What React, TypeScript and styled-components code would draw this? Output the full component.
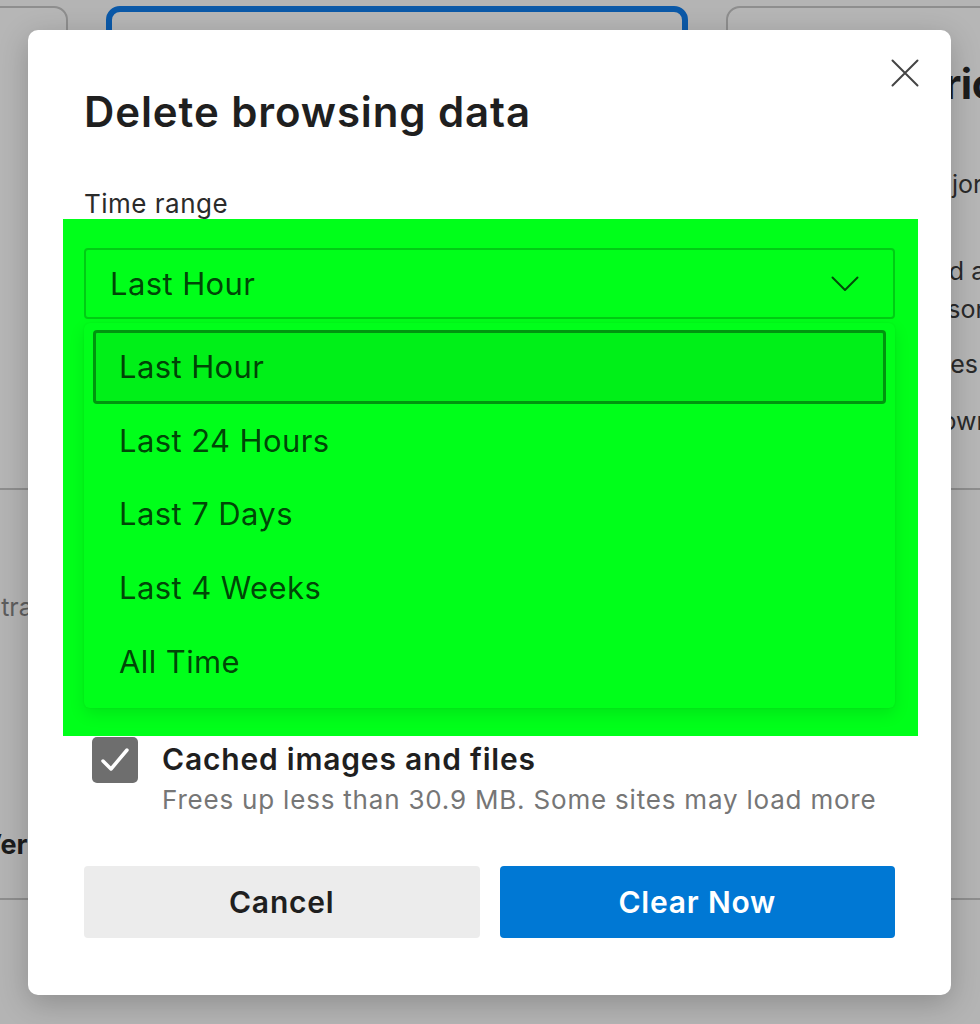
import React from 'react';
import styled, { createGlobalStyle } from 'styled-components';

const GlobalStyle = createGlobalStyle`
  html, body {
    margin: 0;
    padding: 0;
  }
  body {
    background: #b4b4b4;
    font-family: Inter, "Noto Sans", sans-serif;
    overflow: hidden;
  }
`

const Page = styled.div`
  position: relative;
  width: 980px;
  height: 1024px;
  overflow: hidden;
  background: #b4b4b4;
`

/* ---------- page behind the modal ---------- */

const Backdrop = styled.div`
  padding-top: 6px;
  display: flex;
  flex-direction: column;
`

const CardRow = styled.div`
  display: grid;
  grid-template-columns: 88px 582px 600px;
  column-gap: 38px;
  margin-left: -20px;
  height: 484px;
`

const Card = styled.div<{ $selected?: boolean }>`
  box-sizing: border-box;
  border: ${p => p.$selected ? '6px solid #0b59a8' : '2px solid #8e8e8e'};
  border-radius: 14px;
  background: #b6b6b6;
  display: flex;
  flex-direction: column;
`

const CardHeading = styled.div<{ $indent: number }>`
  margin: 50px 0 0 ${p => p.$indent}px;
  font-size: 42px;
  font-weight: 700;
  letter-spacing: -0.5px;
  color: #1c1c1c;
  white-space: nowrap;
`

const CardLine = styled.div<{ $indent: number; $gap: number }>`
  margin: ${p => p.$gap}px 0 0 ${p => p.$indent}px;
  font-size: 25px;
  line-height: 30px;
  color: #2a2a2a;
  white-space: nowrap;
`

const SettingRow = styled.div<{ $height: number }>`
  height: ${p => p.$height}px;
  border-bottom: 2px solid #8e8e8e;
  display: flex;
  flex-direction: column;
  box-sizing: border-box;
`

const SettingText = styled.div<{ $bold?: boolean; $indent: number; $top: number }>`
  margin: ${p => p.$top}px 0 0 ${p => p.$indent}px;
  font-size: ${p => p.$bold ? '27px' : '25px'};
  line-height: 30px;
  font-weight: ${p => p.$bold ? 700 : 400};
  color: ${p => p.$bold ? '#1c1c1c' : '#5e5e5e'};
  white-space: nowrap;
`

/* ---------- modal ---------- */

const Dialog = styled.div`
  position: absolute;
  left: 28px;
  top: 30px;
  width: 923px;
  box-sizing: border-box;
  padding: 58px 56px 57px;
  background: #ffffff;
  border-radius: 10px;
  box-shadow: 0 8px 30px rgba(0, 0, 0, 0.22);
  display: flex;
  flex-direction: column;
`

const CloseButton = styled.button`
  position: absolute;
  top: 29px;
  right: 32px;
  width: 28px;
  height: 28px;
  padding: 0;
  border: none;
  background: none;
  cursor: pointer;
  display: flex;
`

const Title = styled.h1`
  margin: 0;
  font-size: 42px;
  line-height: 48px;
  font-weight: 600;
  letter-spacing: 0.9px;
  color: #1f1f1f;
`

const FieldLabel = styled.div`
  margin-top: 53px;
  font-size: 26px;
  line-height: 30px;
  letter-spacing: 0.5px;
  color: #2b2b2b;
`

const Highlight = styled.div`
  margin: 0 -23px 0 -21px;
  padding: 29px 23px 28px 21px;
  background: #00ff1a;
  display: flex;
  flex-direction: column;
`

const SelectBox = styled.div`
  box-sizing: border-box;
  height: 71px;
  border: 2px solid rgba(0, 0, 0, 0.2);
  border-radius: 4px;
  padding: 0 34px 0 24px;
  display: flex;
  align-items: center;
  justify-content: space-between;
  font-size: 31px;
  letter-spacing: 0.4px;
  color: rgba(0, 0, 0, 0.74);
`

const Menu = styled.ul`
  list-style: none;
  margin: 4px 0 0;
  padding: 7px 9px 10px;
  border-radius: 6px;
  box-shadow: 0 6px 16px rgba(0, 0, 0, 0.1), 0 0 2px rgba(0, 0, 0, 0.08);
  display: flex;
  flex-direction: column;
`

const MenuItem = styled.li<{ $active?: boolean }>`
  box-sizing: border-box;
  height: 73.6px;
  padding: 0 23px;
  border: 3px solid ${p => p.$active ? 'rgba(0, 0, 0, 0.38)' : 'transparent'};
  border-radius: 4px;
  background: ${p => p.$active ? 'rgba(0, 0, 0, 0.06)' : 'transparent'};
  display: flex;
  align-items: center;
  font-size: 31px;
  letter-spacing: 0.4px;
  color: rgba(0, 0, 0, 0.74);
`

const CheckRow = styled.label`
  margin: 1px 0 0 8px;
  display: flex;
  align-items: flex-start;
  gap: 24px;
`

const CheckBox = styled.span`
  flex: none;
  width: 46px;
  height: 46px;
  border-radius: 5px;
  background: #6e6e6e;
  display: flex;
  align-items: center;
  justify-content: center;
`

const CheckText = styled.div`
  display: flex;
  flex-direction: column;
`

const CheckTitle = styled.div`
  margin-top: 5px;
  font-size: 30px;
  line-height: 34px;
  font-weight: 600;
  letter-spacing: 0.8px;
  color: #1f1f1f;
`

const CheckHint = styled.div`
  margin-top: 9px;
  font-size: 26px;
  line-height: 30px;
  letter-spacing: 0.8px;
  color: #767676;
`

const Actions = styled.div`
  margin-top: 51px;
  display: grid;
  grid-template-columns: 1fr 1fr;
  gap: 20px;
`

const ActionButton = styled.button<{ $primary?: boolean }>`
  height: 72px;
  border: none;
  border-radius: 4px;
  background: ${p => p.$primary ? '#0078d4' : '#ececec'};
  color: ${p => p.$primary ? '#ffffff' : '#1f1f1f'};
  font-family: Inter, "Noto Sans", sans-serif;
  font-size: 30px;
  font-weight: 600;
  letter-spacing: 0.8px;
  cursor: pointer;
`

const ranges = ['Last Hour', 'Last 24 Hours', 'Last 7 Days', 'Last 4 Weeks', 'All Time']

const App: React.FC = () => {
  return (
    <Page>
      <GlobalStyle />

      <Backdrop>
        <CardRow>
          <Card />
          <Card $selected />
          <Card>
            <CardHeading $indent={174}>Strict</CardHeading>
            <CardLine $indent={188} $gap={60}>majority of trackers</CardLine>
            <CardLine $indent={192} $gap={57}>and ads will likely</CardLine>
            <CardLine $indent={180} $gap={8}>personalization</CardLine>
            <CardLine $indent={195} $gap={25}>sites running trackers</CardLine>
            <CardLine $indent={185} $gap={27}>known harmful trackers</CardLine>
          </Card>
        </CardRow>
        <SettingRow $height={410}>
          <SettingText $indent={-27} $top={102}>extra</SettingText>
          <SettingText $indent={-18} $top={208} $bold>Ver</SettingText>
        </SettingRow>
      </Backdrop>

      <Dialog role="dialog" aria-label="Delete browsing data">
        <CloseButton aria-label="Close">
          <svg width="28" height="28" viewBox="0 0 28 28">
            <path d="M1.5 1.5 L26.5 26.5 M26.5 1.5 L1.5 26.5" stroke="#444" strokeWidth="2" strokeLinecap="round" fill="none" />
          </svg>
        </CloseButton>

        <Title>Delete browsing data</Title>
        <FieldLabel>Time range</FieldLabel>

        <Highlight>
          <SelectBox>
            <span>Last Hour</span>
            <svg width="28" height="16" viewBox="0 0 28 16">
              <polyline points="1.5,1.5 14,14 26.5,1.5" stroke="rgba(0,0,0,0.7)" strokeWidth="2" fill="none" strokeLinecap="round" strokeLinejoin="round" />
            </svg>
          </SelectBox>
          <Menu>
            {ranges.map((r, i) => (
              <MenuItem key={r} $active={i === 0}>{r}</MenuItem>
            ))}
          </Menu>
        </Highlight>

        <CheckRow>
          <CheckBox>
            <svg width="30" height="26" viewBox="0 0 30 26">
              <polyline points="3,14 11,22 27,3" stroke="#fff" strokeWidth="3.5" fill="none" strokeLinecap="round" strokeLinejoin="round" />
            </svg>
          </CheckBox>
          <CheckText>
            <CheckTitle>Cached images and files</CheckTitle>
            <CheckHint>Frees up less than 30.9 MB. Some sites may load more</CheckHint>
          </CheckText>
        </CheckRow>

        <Actions>
          <ActionButton>Cancel</ActionButton>
          <ActionButton $primary>Clear Now</ActionButton>
        </Actions>
      </Dialog>
    </Page>
  );
}

export default App;
